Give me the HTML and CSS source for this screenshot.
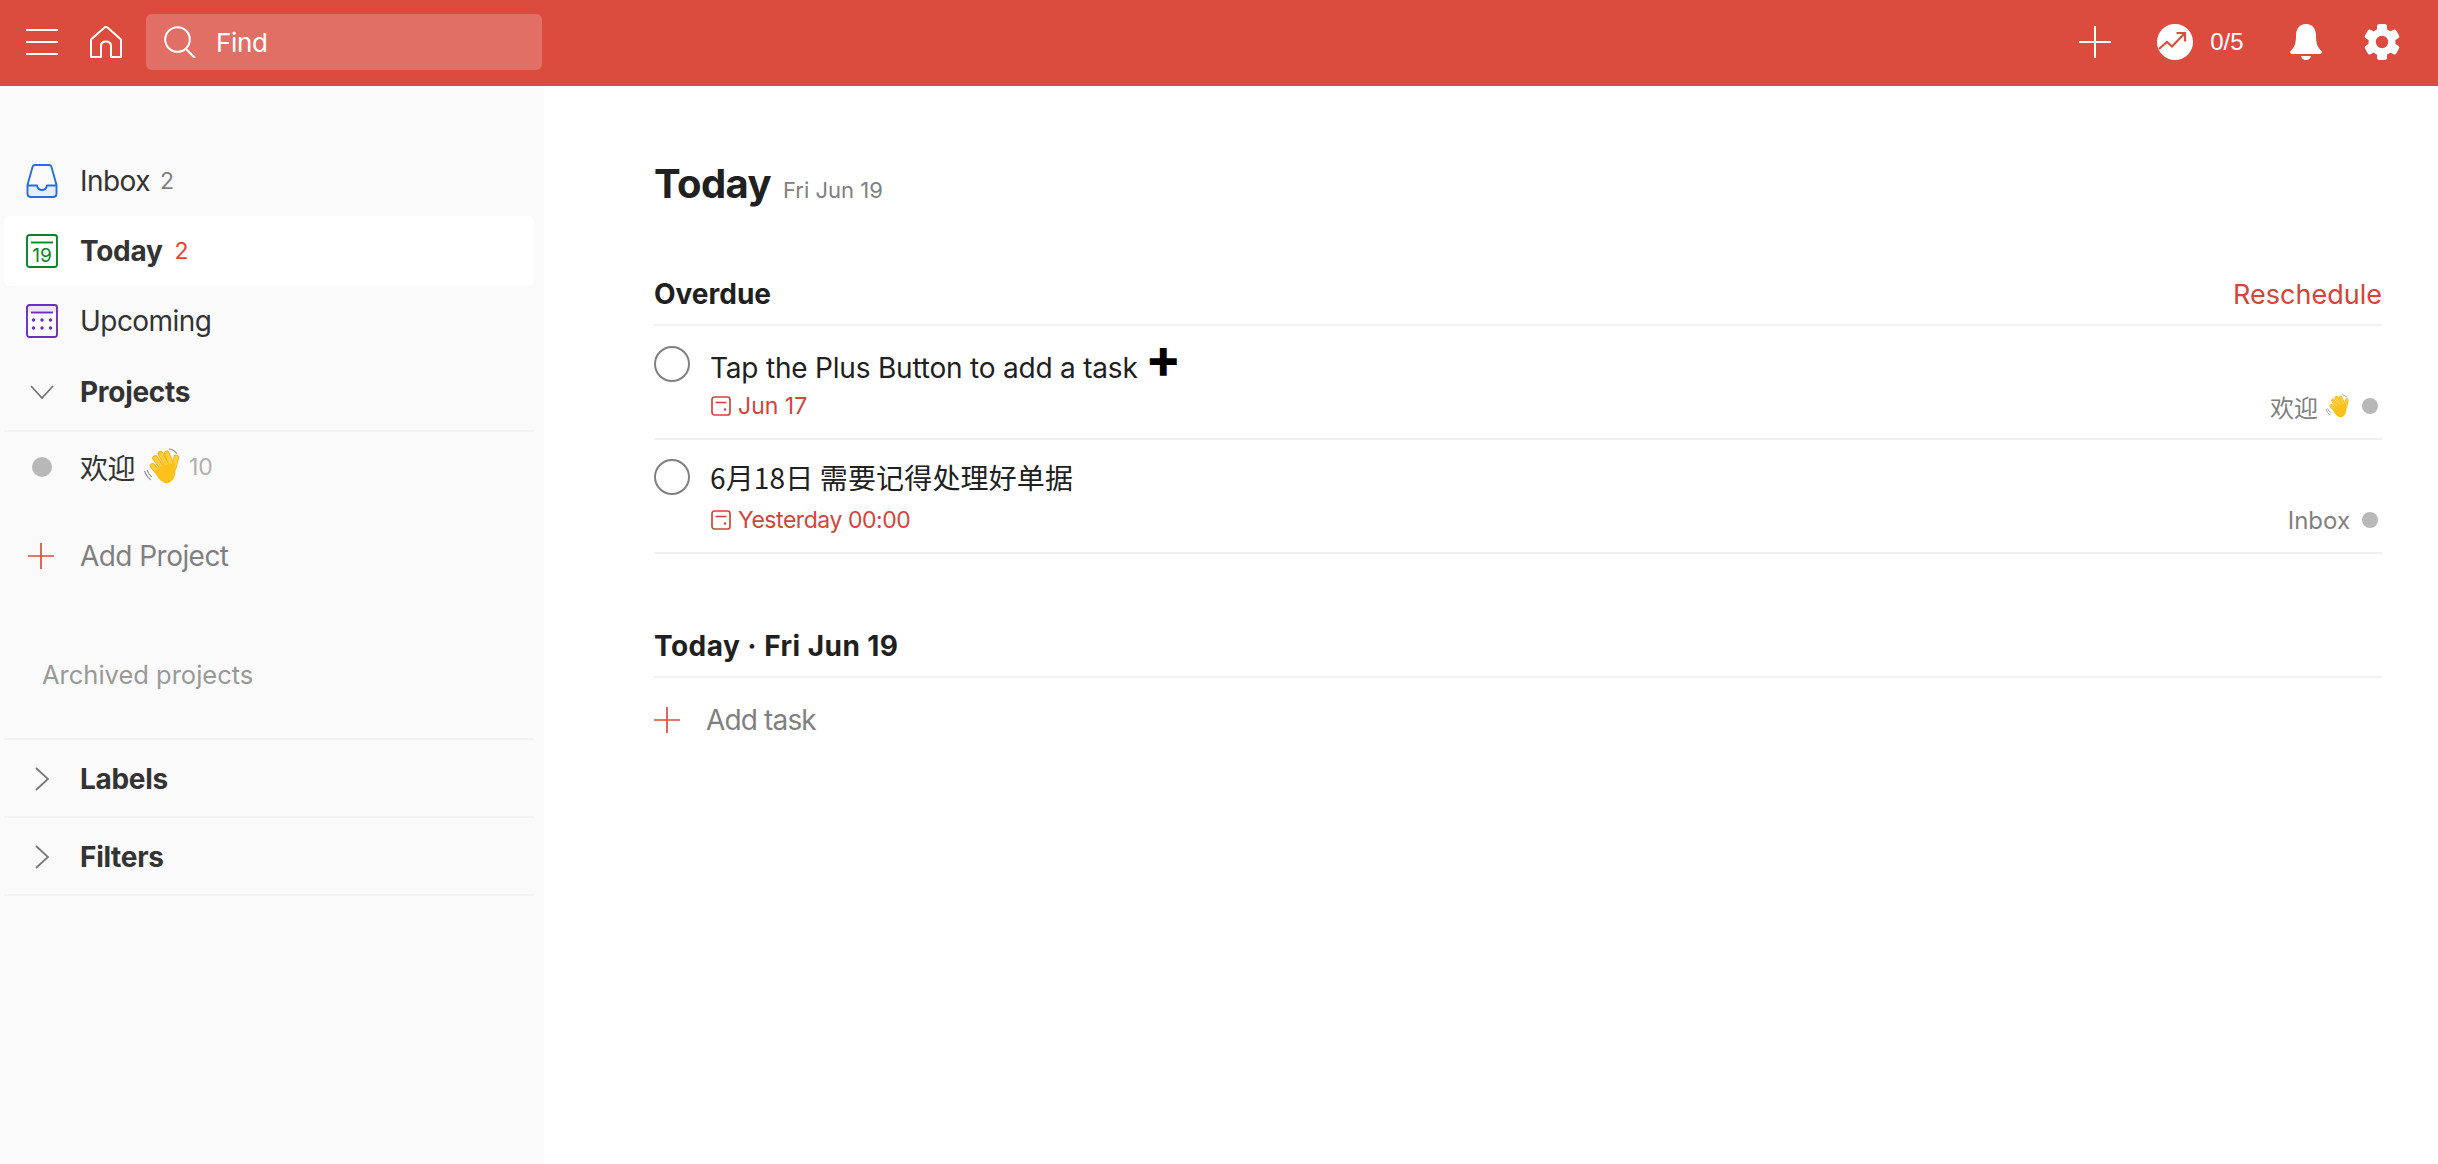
FILE: index.html
```html
<!DOCTYPE html>
<html lang="en">
<head>
<meta charset="utf-8">
<title>Today</title>
<link rel="stylesheet" href="styles.css">
</head>
<body>
<svg class="defs" width="0" height="0" aria-hidden="true">
  <symbol id="wave" viewBox="0 0 36 36">
    <g fill="none" stroke-linecap="round">
      <g stroke="#f5b21a" stroke-width="5.4">
        <path d="M9 17 L16 25"/><path d="M11.500 9.500 L19 20"/><path d="M16.500 5.500 L23 17"/><path d="M22.500 5 L26.500 15"/><path d="M31.500 9 L29 19"/>
      </g>
      <g stroke="#fdd03a" stroke-width="3.600">
        <path d="M9 17 L16 25"/><path d="M11.500 9.500 L19 20"/><path d="M16.500 5.500 L23 17"/><path d="M22.500 5 L26.500 15"/><path d="M31.500 9 L29 19"/>
      </g>
      <g stroke="#8a8a8a" stroke-width="1">
        <path d="M1.500 22 Q3 27 7 30"/><path d="M4 21 Q5 25 8 27"/><path d="M25 1 Q29 1.500 32 5"/>
      </g>
    </g>
    <path d="M15 18 L30 14 Q32 24 29 29 Q25 35 20 33 Q14 30 11 22Z" fill="#fcc21b"/>
  </symbol>
  <symbol id="due" viewBox="0 0 20 20">
    <rect x="1" y="1" width="18" height="18" rx="2.500" fill="none" stroke="#d1453b" stroke-width="1.700"/>
    <path d="M4.500 6.500 H15.500" stroke="#d1453b" stroke-width="1.600"/>
    <circle cx="14" cy="13.500" r="1.300" fill="#d1453b"/>
  </symbol>
  <symbol id="thinplus" viewBox="0 0 26 26">
    <path d="M13 0 V26 M0 13 H26" stroke="#db4c3f" stroke-width="1.700"/>
  </symbol>
</svg>

<header class="topbar">
  <div class="top-left">
    <svg class="ic-menu" viewBox="0 0 32 26"><path d="M0 1 H32 M0 13 H32 M0 25 H32" stroke="#fff" stroke-width="2"/></svg>
    <svg class="ic-home" viewBox="0 0 32 32"><path d="M1 13.500 L14.500 1.500 Q16 .5 17.500 1.500 L31 13.500 V31 H21 V20 Q21 15.500 16 15.500 Q11 15.500 11 20 V31 H1Z" fill="none" stroke="#fff" stroke-width="2" stroke-linejoin="round"/></svg>
    <div class="search">
      <svg class="ic-search" viewBox="0 0 32 32"><circle cx="13.500" cy="13.500" r="12.300" fill="none" stroke="#fff" stroke-width="2"/><path d="M22 23 L31 32" stroke="#fff" stroke-width="2"/></svg>
      <span class="search-text">Find</span>
    </div>
  </div>
  <div class="top-right">
    <svg class="ic-add" viewBox="0 0 32 32"><path d="M16 0 V32 M0 16 H32" stroke="#fff" stroke-width="2"/></svg>
    <div class="karma">
      <svg class="ic-karma" viewBox="0 0 36 36"><circle cx="18" cy="18" r="18" fill="#fff"/><path d="M2 25 L10 18 L15 22.500 L27 10 M19.500 9 H28 V17.500" fill="none" stroke="#db4c3f" stroke-width="2.200"/></svg>
      <span class="karma-text">0/5</span>
    </div>
    <svg class="ic-bell" viewBox="0 0 32 36"><path d="M16 0 C23 0 26 5 26 12 C26 20 28 24 31.500 27 Q32.500 29 30.500 30 H1.500 Q-.5 29 .5 27 C4 24 6 20 6 12 C6 5 9 0 16 0Z M11 32 H21 Q20 36 16 36 Q12 36 11 32Z" fill="#fff"/></svg>
    <svg class="ic-gear" viewBox="0 0 36 36">
      <circle cx="18" cy="18" r="13.500" fill="#fff"/>
      <rect x="13" y="0" width="10" height="36" rx="2.500" fill="#fff"/>
      <rect x="13" y="0" width="10" height="36" rx="2.500" fill="#fff" transform="rotate(60 18 18)"/>
      <rect x="13" y="0" width="10" height="36" rx="2.500" fill="#fff" transform="rotate(120 18 18)"/>
      <circle cx="18" cy="18" r="6.200" fill="#db4c3f"/>
    </svg>
  </div>
</header>

<div class="layout">
  <aside class="sidebar">
    <nav class="filters">
      <div class="nav-row">
        <span class="slot"><svg class="ic-32" viewBox="0 0 32 34"><path d="M2 22 H11 Q12 26 16 26 Q20 26 21 22 H30 V30 Q30 32.500 27 32.500 H5 Q2 32.500 2 30Z" fill="#e6eefb"/><path d="M1.500 21 L6.500 3 Q7 1 9 1 H23 Q25 1 25.500 3 L30.500 21 V30 Q30.500 33 27 33 H5 Q1.500 33 1.500 30Z M2 21.500 H11 Q12 26 16 26 Q20 26 21 21.500 H30" fill="none" stroke="#246fe0" stroke-width="1.900" stroke-linejoin="round"/></svg></span>
        <span class="nav-label">Inbox</span><span class="count">2</span>
      </div>
      <div class="nav-row is-active">
        <span class="slot"><svg class="ic-32" viewBox="0 0 32 34"><rect x="1" y="1" width="30" height="32" rx="2.500" fill="#fff" stroke="#058527" stroke-width="1.900"/><path d="M5 8.500 H27" stroke="#058527" stroke-width="1.900"/><text class="cal-num" x="16" y="28" text-anchor="middle">19</text></svg></span>
        <span class="nav-label nav-bold">Today</span><span class="count count-red">2</span>
      </div>
      <div class="nav-row">
        <span class="slot"><svg class="ic-32" viewBox="0 0 32 34"><path d="M1 8 H31 V3.500 Q31 1 28.500 1 H3.500 Q1 1 1 3.500Z" fill="#ede6f8"/><rect x="1" y="1" width="30" height="32" rx="2.500" fill="none" stroke="#692fc2" stroke-width="1.900"/><path d="M5 8.500 H27" stroke="#692fc2" stroke-width="1.900"/><g fill="#692fc2"><circle cx="7.500" cy="16" r="1.700"/><circle cx="16" cy="16" r="1.700"/><circle cx="24.500" cy="16" r="1.700"/><circle cx="7.500" cy="24" r="1.700"/><circle cx="16" cy="24" r="1.700"/><circle cx="24.500" cy="24" r="1.700"/></g></svg></span>
        <span class="nav-label">Upcoming</span>
      </div>
    </nav>

    <div class="section-head section-projects">
      <span class="slot"><svg class="chev-down" viewBox="0 0 24 14"><path d="M1 1 L12 13 L23 1" fill="none" stroke="#777" stroke-width="1.800"/></svg></span>
      <span class="nav-label nav-bold">Projects</span>
    </div>
    <div class="project-row">
      <span class="slot"><span class="dot dot-large"></span></span>
      <span class="nav-label cjk">欢迎</span>
      <svg class="wave-large"><use href="#wave"/></svg>
      <span class="count count-muted">10</span>
    </div>
    <div class="add-project">
      <span class="slot slot-plus"><svg class="plus"><use href="#thinplus"/></svg></span>
      <span class="nav-label label-muted">Add Project</span>
    </div>
    <div class="archived">Archived projects</div>
    <div class="section-head section-collapsed section-top">
      <span class="slot"><svg class="chev-right" viewBox="0 0 14 24"><path d="M1 1 L13 12 L1 23" fill="none" stroke="#777" stroke-width="1.800"/></svg></span>
      <span class="nav-label nav-bold">Labels</span>
    </div>
    <div class="section-head section-collapsed">
      <span class="slot"><svg class="chev-right" viewBox="0 0 14 24"><path d="M1 1 L13 12 L1 23" fill="none" stroke="#777" stroke-width="1.800"/></svg></span>
      <span class="nav-label nav-bold">Filters</span>
    </div>
  </aside>

  <main class="content">
    <div class="title-row">
      <h1 class="title">Today</h1>
      <span class="subtitle">Fri Jun 19</span>
    </div>

    <section class="group group-overdue">
      <div class="group-head">
        <h2 class="group-title">Overdue</h2>
        <span class="reschedule">Reschedule</span>
      </div>
      <div class="task task-one">
        <span class="check"></span>
        <div class="task-body">
          <div class="task-title">Tap the Plus Button to add a task <span class="bigplus">✚</span></div>
          <div class="task-meta">
            <span class="due"><svg class="due-ic"><use href="#due"/></svg>Jun 17</span>
            <span class="where"><span class="cjk">欢迎</span><svg class="wave-small"><use href="#wave"/></svg><span class="dot dot-small"></span></span>
          </div>
        </div>
      </div>
      <div class="task task-two">
        <span class="check"></span>
        <div class="task-body">
          <div class="task-title cjk">6月18日 需要记得处理好单据</div>
          <div class="task-meta">
            <span class="due due-long"><svg class="due-ic"><use href="#due"/></svg>Yesterday 00:00</span>
            <span class="where">Inbox<span class="dot dot-small"></span></span>
          </div>
        </div>
      </div>
    </section>

    <section class="group group-today">
      <div class="group-head">
        <h2 class="group-title title-wide">Today · Fri Jun 19</h2>
      </div>
      <div class="add-task">
        <svg class="plus"><use href="#thinplus"/></svg>
        <span class="add-task-text">Add task</span>
      </div>
    </section>
  </main>
</div>
</body>
</html>
```

FILE: styles.css
```css
* { box-sizing: border-box; }
html, body { margin: 0; height: 100%; }
body {
  font-family: Inter, "Noto Sans CJK SC", sans-serif;
  color: #202020;
  background: #fff;
  display: flex;
  flex-direction: column;
  overflow: hidden;
}
.defs { display: block; height: 0; }
.cjk { font-family: "Noto Sans CJK SC", Inter, sans-serif; }

/* Top bar */
.topbar {
  height: 86px;
  flex: none;
  background: #db4c3f;
  display: flex;
  justify-content: space-between;
  align-items: center;
  padding: 0 38px 2px 26px;
  color: #fff;
}
.top-left, .top-right { display: flex; align-items: center; }
.ic-menu { width: 32px; height: 26px; margin-right: 32px; }
.ic-home { width: 32px; height: 32px; margin-right: 24px; }
.search {
  width: 396px;
  height: 56px;
  background: rgba(255, 255, 255, .2);
  border-radius: 6px;
  display: flex;
  align-items: center;
  padding-left: 18px;
}
.ic-search { width: 32px; height: 32px; margin-right: 20px; }
.search-text { font-size: 26px; letter-spacing: -.3px; }
.ic-add { width: 32px; height: 32px; margin-right: 46px; }
.karma { display: flex; align-items: center; margin-right: 46.500px; }
.ic-karma { width: 36px; height: 36px; margin-right: 17px; }
.karma-text { font-family: "Liberation Sans", sans-serif; font-size: 24px; }
.ic-bell { width: 32px; height: 36px; margin-right: 42px; }
.ic-gear { width: 36px; height: 36px; }

/* Sidebar */
.layout { flex: 1; display: flex; min-height: 0; }
.sidebar {
  width: 544px;
  flex: none;
  background: #fafafa;
  padding: 60px 10px 0 4px;
}
.nav-row {
  height: 70px;
  display: flex;
  align-items: center;
  padding-left: 22px;
  border-radius: 6px;
}
.is-active { background: #fff; }
.slot { width: 32px; display: flex; justify-content: center; margin-right: 22px; flex: none; }
.ic-32 { width: 32px; height: 34px; }
.cal-num { font: 400 19px Inter, sans-serif; fill: #058527; }
.nav-label { font-size: 28px; color: #333; letter-spacing: -.55px; }
.nav-bold { font-weight: 700; letter-spacing: -.3px; }
.label-muted { color: #808080; }
.count { font-size: 23px; color: #808080; margin-left: 10px; }
.count-red { color: #e44232; margin-left: 12px; }
.count-muted { color: #b0b0b0; margin-left: 8px; }

.section-head {
  display: flex;
  align-items: center;
  padding-left: 22px;
  border-bottom: 2px solid #f2f2f2;
}
.section-projects { height: 76px; padding-bottom: 2px; }
.chev-down { width: 24px; height: 14px; }
.chev-right { width: 14px; height: 24px; }
.project-row {
  height: 70px;
  display: flex;
  align-items: center;
  padding-left: 22px;
}
.dot { display: block; border-radius: 50%; background: #b8b8b8; }
.dot-large { width: 20px; height: 20px; }
.dot-small { width: 16px; height: 16px; margin-left: 12px; }
.wave-large { width: 38px; height: 38px; margin-left: 8px; }
.wave-small { width: 25px; height: 25px; margin-left: 7px; }
.add-project {
  height: 70px;
  margin-top: 19px;
  display: flex;
  align-items: center;
  padding-left: 22px;
}
.slot-plus { justify-content: flex-start; padding-left: 2px; }
.plus { width: 26px; height: 26px; flex: none; }
.archived {
  height: 78px;
  margin-top: 44px;
  padding-left: 38px;
  font-size: 25.500px;
  color: #999;
  display: flex;
  align-items: center;
}
.section-collapsed { height: 78px; padding-top: 2px; }
.section-top { border-top: 2px solid #f2f2f2; height: 80px; margin-top: 25px; }

/* Main */
.content { flex: 1; min-width: 0; padding: 70px 56px 0 110px; }
.title-row { display: flex; align-items: baseline; height: 56px; }
.title { margin: 0; font-size: 40px; font-weight: 700; line-height: 56px; color: #202020; letter-spacing: -.6px; }
.subtitle { font-size: 22px; color: #808080; margin-left: 12px; }
.group-overdue { margin-top: 60px; }
.group-head {
  display: flex;
  justify-content: space-between;
  align-items: baseline;
  height: 54px;
  padding-top: 5px;
  border-bottom: 2px solid #f0f0f0;
}
.group-title { margin: 0; font-size: 28px; font-weight: 700; line-height: 34px; }
.title-wide { letter-spacing: .45px; }
.reschedule { font-size: 27px; color: #d1453b; line-height: 34px; }
.task { display: flex; border-bottom: 2px solid #f0f0f0; }
.task-one { height: 114px; padding-top: 20px; }
.task-two { height: 114px; padding-top: 19px; }
.check {
  width: 36px;
  height: 36px;
  flex: none;
  border: 2px solid #808080;
  border-radius: 50%;
  margin-right: 20px;
}
.task-body { flex: 1; min-width: 0; }
.task-title { font-size: 28px; line-height: 40px; color: #202020; letter-spacing: -.2px; }
.task-one .task-title { margin-top: 2px; }
.task-two .task-title { margin-top: -2px; letter-spacing: .15px; }
.bigplus { font-size: 32px; line-height: 20px; color: #000; margin-left: 2px; position: relative; top: -4px; }
.task-meta { display: flex; justify-content: space-between; align-items: center; height: 32px; margin-top: 2px; padding-right: 4px; }
.task-two .task-meta { margin-top: 7px; }
.due { display: flex; align-items: center; font-size: 23px; color: #d1453b; }
.due-long { letter-spacing: -.45px; }
.due-ic { width: 20px; height: 20px; margin: 0 7px 0 1px; }
.where { display: flex; align-items: center; font-size: 24px; color: #808080; }
.group-today { margin-top: 70px; }
.add-task { display: flex; align-items: center; height: 84px; }
.add-task-text { font-size: 28px; color: #808080; margin-left: 26px; letter-spacing: -.85px; }
```
